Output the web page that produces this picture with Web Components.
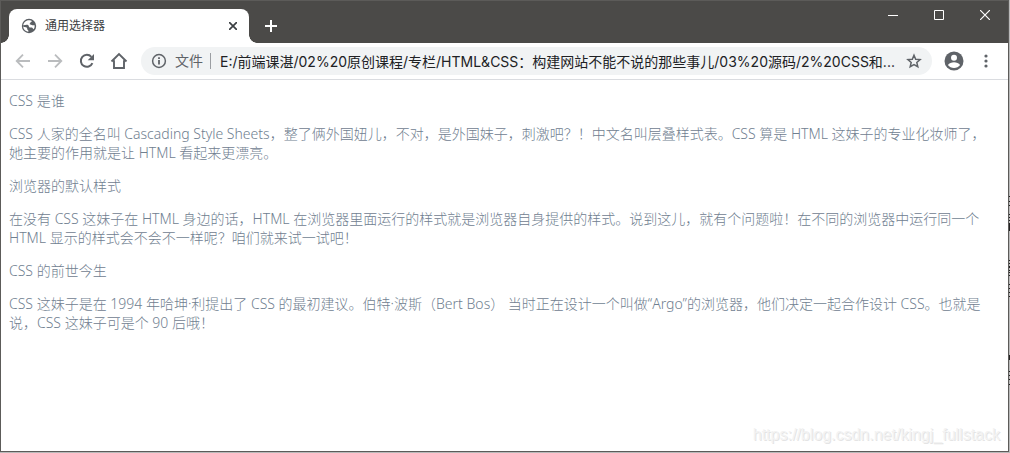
<!DOCTYPE html>
<html lang="zh-CN">
<head>
<meta charset="utf-8">
<title>通用选择器</title>
<style>
html { height: 100%; background: #b9b9b9; }
body { margin: 0; height: 100%; box-sizing: border-box; padding: 0 1px 1px 0; position: relative;
  font-family: "Noto Sans", "Noto Sans CJK SC", sans-serif; text-spacing-trim: space-all; }
</style>
</head>
<body>
<browser-window>
  <title-bar slot="title"><browser-tab>通用选择器</browser-tab></title-bar>
  <tool-bar slot="tools"></tool-bar>
  <article-page>
    <p>CSS 是谁</p>
    <p>CSS 人家的全名叫 Cascading Style Sheets，整了俩外国妞儿，不对，是外国妹子，刺激吧？！中文名叫层叠样式表。CSS 算是 HTML 这妹子的专业化妆师了，她主要的作用就是让 HTML 看起来更漂亮。</p>
    <p>浏览器的默认样式</p>
    <p>在没有 CSS 这妹子在 HTML 身边的话，HTML 在浏览器里面运行的样式就是浏览器自身提供的样式。说到这儿，就有个问题啦！在不同的浏览器中运行同一个 HTML 显示的样式会不会不一样呢？咱们就来试一试吧！</p>
    <p>CSS 的前世今生</p>
    <p>CSS 这妹子是在 1994 年哈坤·利提出了 CSS 的最初建议。伯特·波斯（Bert Bos） 当时正在设计一个叫做“Argo”的浏览器，他们决定一起合作设计 CSS。也就是说，CSS 这妹子可是个 90 后哦！</p>
  </article-page>
  <water-mark slot="mark">https://blog.csdn.net/kingj_fullstack</water-mark>
</browser-window>
<edge-strip></edge-strip>

<script>
function element(name, html) {
  const template = document.createElement('template');
  template.innerHTML = html;
  customElements.define(name, class extends HTMLElement {
    constructor() {
      super();
      this.attachShadow({ mode: 'open' }).append(template.content.cloneNode(true));
    }
  });
}

element('browser-window', `
<style>
:host { display: flex; flex-direction: column; min-height: 100%; box-sizing: border-box;
  border: 1px solid #5c5b59; background: #fff; position: relative; }
main { flex: 1; }
</style>
<slot name="title"></slot><slot name="tools"></slot><main><slot></slot></main><slot name="mark"></slot>`);

element('title-bar', `
<style>
:host { display: flex; align-items: flex-start; height: 42px; background: #4b4a48; color: #fff; }
slot { display: block; }
.tabs { display: flex; align-items: center; padding: 8px 0 0 8px; flex: 1; }
button { border: 0; padding: 0; background: none; color: inherit; display: grid; place-items: center; }
.new { width: 28px; height: 34px; margin-left: 8px; }
.win { width: 46px; height: 28px; }
</style>
<div class="tabs"><slot></slot>
<button class="new" aria-label="新标签页"><svg width="12" height="12" stroke="currentColor" stroke-width="2"><path d="M6 0v12M0 6h12"/></svg></button></div>
<button class="win" aria-label="最小化"><svg width="10" height="10" stroke="currentColor"><path d="M0 5.5h10"/></svg></button>
<button class="win" aria-label="最大化"><svg width="10" height="10" stroke="currentColor" fill="none"><path d="M.5.5h9v9h-9z"/></svg></button>
<button class="win" aria-label="关闭"><svg width="10" height="10" stroke="currentColor" stroke-width="1.2"><path d="M0 0l10 10M10 0L0 10"/></svg></button>`);

element('browser-tab', `
<style>
:host { display: flex; align-items: center; box-sizing: border-box; width: 240px; height: 34px; padding: 0 8px 0 12px;
  background: #fff; border-radius: 8px 8px 0 0; color: #3c4043; font-size: 12px; line-height: 16px; position: relative; }
:host::before, :host::after { content: ""; position: absolute; bottom: 0; width: 8px; height: 8px; }
:host::before { right: 100%; background: radial-gradient(circle at 0 0, transparent 7.5px, #fff 8px); }
:host::after { left: 100%; background: radial-gradient(circle at 100% 0, transparent 7.5px, #fff 8px); }
.name { flex: 1; margin-left: 8px; }
button { border: 0; padding: 0; width: 16px; height: 16px; background: none; color: #3c4043; display: grid; place-items: center; }
</style>
<svg width="16" height="16" viewBox="0 0 16 16"><circle cx="8" cy="8" r="7.2" fill="#5a5e63"/><path fill="#fff" d="M8.6 2.3c1 .1 1.800.4 2.600.9-.8.4-1.500.5-1.700 1.400-.1.800-.9.800-.8 1.500.2.800 1.400.4 2 .9.7.6 1.600.3 2.900.2.2 1.500-.1 2.900-.9 4-.9-.3-1-1.500-2-1.600-.8-.2-1.700.3-2.400-.4-.8-.8-.4-1.700-1.200-2.200C5.900 6.300 4 6.900 2.300 7.200c.1.900 0 1.500.6 1.800 1.300.2 2.700.1 3.200 1.100.3.7-.3 1.200.5 1.700.5.3.9.7.8 1.900-3.300-.2-5.300-2.900-5.200-5.700C2.300 4.700 4.900 2 8.600 2.300z"/></svg>
<span class="name"><slot></slot></span>
<button aria-label="关闭标签页"><svg width="8" height="8" stroke="currentColor" stroke-width="1.700"><path d="M0 0l8 8M8 0L0 8"/></svg></button>`);

element('tool-bar', `
<style>
:host { display: flex; align-items: center; height: 36px; padding: 0 6px; border-bottom: 1px solid #dadce0; background: #fff; color: #5f6368; }
button { border: 0; padding: 0; width: 32px; height: 28px; background: none; color: inherit; display: grid; place-items: center; }
button:disabled { color: #babcbe; }
address-bar { flex: 1; margin: 0 6px; }
</style>
<button disabled aria-label="后退"><svg width="16" height="16" fill="none" stroke="currentColor" stroke-width="1.800"><path d="M15 8H2M8 1.700L1.700 8 8 14.300"/></svg></button>
<button disabled aria-label="前进"><svg width="16" height="16" fill="none" stroke="currentColor" stroke-width="1.800"><path d="M1 8h13M8 1.700L14.300 8 8 14.300"/></svg></button>
<button aria-label="重新加载"><svg width="16" height="16" viewBox="0 0 16 16"><path fill="none" stroke="currentColor" stroke-width="2" d="M13.400 10.200A6 6 0 1 1 12.400 3.900"/><path fill="currentColor" d="M15 1v6.300H8.700z"/></svg></button>
<button aria-label="主页"><svg width="18" height="18" viewBox="0 0 18 18" fill="none" stroke="currentColor" stroke-width="1.900"><path d="M1.500 9.500L9 2l7.500 7.500M4 8.300V16h10V8.300" /></svg></button>
<address-bar></address-bar>
<button aria-label="用户"><svg width="20" height="20" viewBox="0 0 20 20"><circle cx="10" cy="10" r="9.500" fill="currentColor"/><circle cx="10" cy="6.800" r="3" fill="#fff"/><path fill="#fff" d="M3.900 14c1.200-1.900 3.700-2.700 6.100-2.700s4.900.8 6.100 2.700c-1.400 2-3.700 3-6.100 3s-4.700-1-6.100-3z"/></svg></button>
<button aria-label="菜单"><svg width="4" height="14" fill="currentColor"><circle cx="2" cy="2" r="1.600"/><circle cx="2" cy="7" r="1.600"/><circle cx="2" cy="12" r="1.600"/></svg></button>`);

element('address-bar', `
<style>
:host { display: flex; align-items: center; height: 28px; padding: 0 10px; border-radius: 14px; background: #f1f3f4; font-size: 14px; line-height: 20px; color: #5f6368; }
label { margin-left: 8px; padding-right: 7px; }
i { width: 1px; height: 16px; background: #9b9ea2; margin-right: 9px; }
input { flex: 1; min-width: 0; margin-right: 8px; border: 0; padding: 0; background: none; font: inherit; font-family: Inter, "Noto Sans CJK SC", sans-serif; color: #202124; text-overflow: ellipsis; outline: 0; height: 24px; }
button { border: 0; padding: 0; width: 16px; height: 16px; background: none; color: inherit; }
svg { display: block; }
</style>
<svg width="16" height="16" fill="none" stroke="currentColor" stroke-width="1.500"><circle cx="8" cy="8" r="6.400"/><path stroke-width="1.800" d="M8 7v4.500M8 4.300v1.700"/></svg>
<label for="url">文件</label><i></i>
<input id="url" type="text" value="E:/前端课湛/02%20原创课程/专栏/HTML&amp;CSS：构建网站不能不说的那些事儿/03%20源码/2%20CSS和...">
<button aria-label="收藏"><svg width="16" height="16" viewBox="0 0 16 16" fill="none" stroke="currentColor" stroke-width="1.500"><path d="M8 2.200l1.700 4 4.400.4-3.300 2.900 1 4.200L8 11.500l-3.800 2.200 1-4.200-3.300-2.900 4.400-.4z"/></svg></button>`);

element('article-page', `
<style>
:host { display: block; padding: 11px 12px 11px 8px; font-size: 14px; line-height: 19px; font-weight: 300; color: #708090; }
::slotted(p) { margin: 0 0 14px; }
</style>
<slot></slot>`);

element('water-mark', `
<style>
:host { position: absolute; right: 8px; bottom: 7px; font-family: "Liberation Sans", Arial, sans-serif; font-size: 16px; line-height: 18px; color: #f3f3f3; text-shadow: 1px 1px 0 #e4e4e4; }
</style>
<slot></slot>`);

element('edge-strip', `
<style>
:host { position: absolute; top: 0; right: 0; bottom: 0; width: 1px; }
svg { display: block; }
</style>
<svg width="1" height="400" stroke="#222" stroke-width="2"><path stroke-dasharray="1 4 1 3 1 8 1 2 1 2 1 2 8 29 1 2 1 2 2 2 1 1 1 2 1 8 1 3 1 3 1 3 1 58 5 11 1 3 1 3 1 4 1 20" d="M.5 196v190"/></svg>`);
</script>
</body>
</html>
